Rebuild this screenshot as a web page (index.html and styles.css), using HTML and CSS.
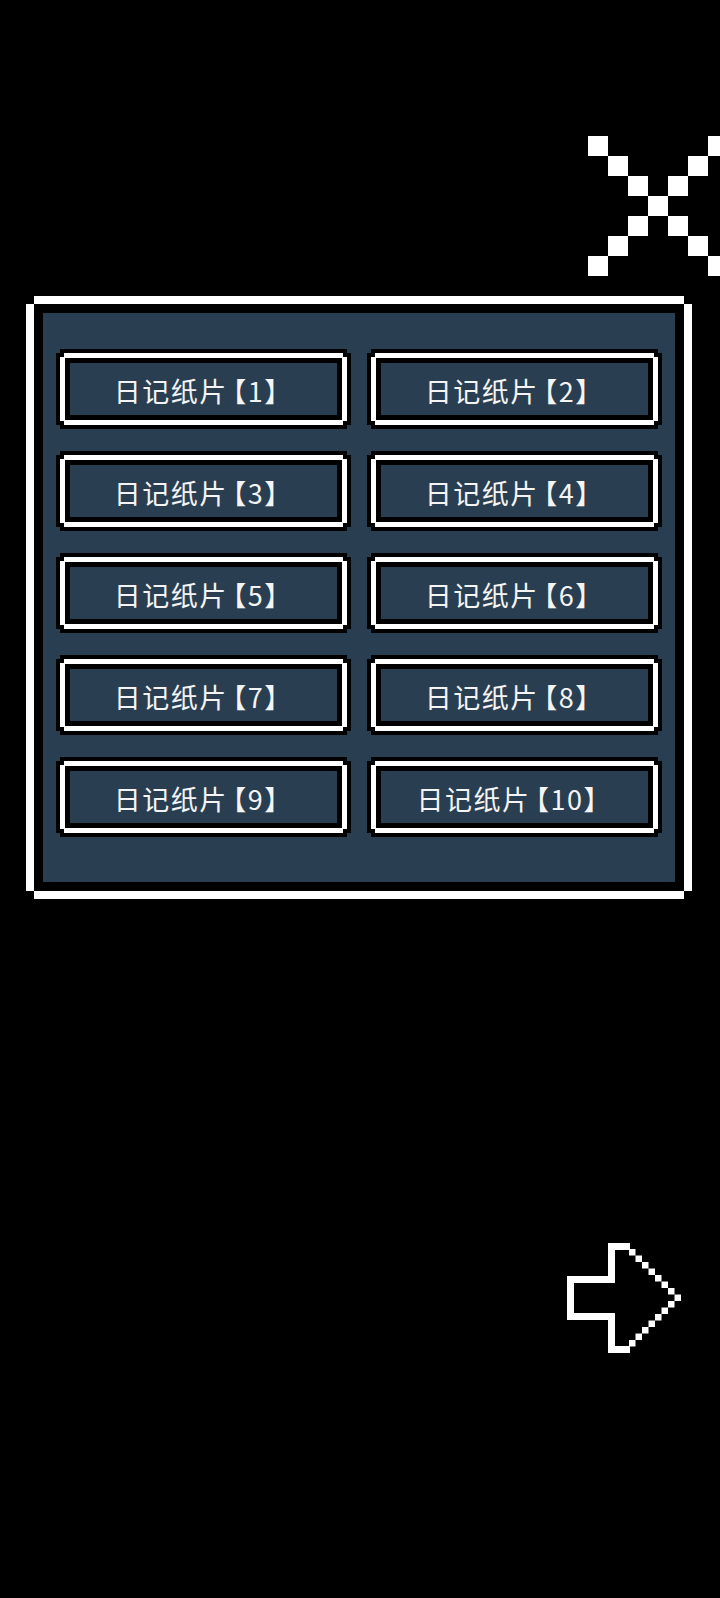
FILE: index.html
```html
<!DOCTYPE html>
<html lang="zh-CN">
<head>
<meta charset="utf-8">
<title>日记纸片</title>
<link rel="stylesheet" href="styles.css">
</head>
<body>
<div class="screen">
  <div class="topbar">
    <svg class="close" width="132" height="140" viewBox="588 136 132 140" aria-label="关闭">
      <g fill="#fff">
        <rect x="588" y="136" width="20" height="20"/><rect x="708" y="136" width="20" height="20"/>
        <rect x="608" y="156" width="20" height="20"/><rect x="688" y="156" width="20" height="20"/>
        <rect x="628" y="176" width="20" height="20"/><rect x="668" y="176" width="20" height="20"/>
        <rect x="648" y="196" width="20" height="20"/>
        <rect x="628" y="216" width="20" height="20"/><rect x="668" y="216" width="20" height="20"/>
        <rect x="608" y="236" width="20" height="20"/><rect x="688" y="236" width="20" height="20"/>
        <rect x="588" y="256" width="20" height="20"/><rect x="708" y="256" width="20" height="20"/>
      </g>
    </svg>
  </div>

  <div class="panel">
    <div class="panel-black">
      <div class="panel-body">
        <div class="btn"><div class="btn-w"><div class="btn-in">日记纸片<span class="bk bk-l">【</span>1<span class="bk">】</span></div></div></div>
        <div class="btn"><div class="btn-w"><div class="btn-in">日记纸片<span class="bk bk-l">【</span>2<span class="bk">】</span></div></div></div>
        <div class="btn"><div class="btn-w"><div class="btn-in">日记纸片<span class="bk bk-l">【</span>3<span class="bk">】</span></div></div></div>
        <div class="btn"><div class="btn-w"><div class="btn-in">日记纸片<span class="bk bk-l">【</span>4<span class="bk">】</span></div></div></div>
        <div class="btn"><div class="btn-w"><div class="btn-in">日记纸片<span class="bk bk-l">【</span>5<span class="bk">】</span></div></div></div>
        <div class="btn"><div class="btn-w"><div class="btn-in">日记纸片<span class="bk bk-l">【</span>6<span class="bk">】</span></div></div></div>
        <div class="btn"><div class="btn-w"><div class="btn-in">日记纸片<span class="bk bk-l">【</span>7<span class="bk">】</span></div></div></div>
        <div class="btn"><div class="btn-w"><div class="btn-in">日记纸片<span class="bk bk-l">【</span>8<span class="bk">】</span></div></div></div>
        <div class="btn"><div class="btn-w"><div class="btn-in">日记纸片<span class="bk bk-l">【</span>9<span class="bk">】</span></div></div></div>
        <div class="btn"><div class="btn-w"><div class="btn-in">日记纸片<span class="bk bk-l">【</span>10<span class="bk">】</span></div></div></div>
      </div>
    </div>
  </div>

  <div class="bottombar">
    <svg class="next" width="130" height="120" viewBox="560 1238 130 120" aria-label="下一页">
      <g fill="#fff">
        <rect x="608" y="1243" width="22" height="7"/>
        <rect x="608" y="1243" width="7" height="40"/>
        <rect x="567" y="1276" width="48" height="7"/>
        <rect x="567" y="1276" width="7" height="44"/>
        <rect x="567" y="1313" width="48" height="7"/>
        <rect x="608" y="1313" width="7" height="40"/>
        <rect x="608" y="1346" width="22" height="7"/>
        <rect x="629" y="1249" width="6.5" height="6.5"/>
        <rect x="635.5" y="1255.5" width="6.5" height="6.5"/>
        <rect x="642" y="1262" width="6.5" height="6.5"/>
        <rect x="648.5" y="1268.5" width="6.5" height="6.5"/>
        <rect x="655" y="1275" width="6.5" height="6.5"/>
        <rect x="661.5" y="1281.5" width="6.5" height="6.5"/>
        <rect x="668" y="1288" width="6.5" height="6.5"/>
        <rect x="674.5" y="1294.5" width="6.5" height="6.5"/>
        <rect x="668" y="1301" width="6.5" height="6.5"/>
        <rect x="661.5" y="1307.5" width="6.5" height="6.5"/>
        <rect x="655" y="1314" width="6.5" height="6.5"/>
        <rect x="648.5" y="1320.5" width="6.5" height="6.5"/>
        <rect x="642" y="1327" width="6.5" height="6.5"/>
        <rect x="635.5" y="1333.5" width="6.5" height="6.5"/>
        <rect x="629" y="1340" width="6.5" height="6.5"/>
      </g>
    </svg>
  </div>
</div>
</body>
</html>
```

FILE: styles.css
```css
html, body {
  margin: 0;
  padding: 0;
  background: #000;
}

body {
  width: 720px;
  height: 1598px;
  overflow: hidden;
  font-family: "Noto Sans CJK SC", "Noto Sans", sans-serif;
}

.screen {
  width: 720px;
  height: 1598px;
  display: flex;
  flex-direction: column;
}

.topbar {
  display: flex;
  justify-content: flex-end;
  padding-top: 136px;
  height: 140px;
}

.close {
  display: block;
}

.panel {
  margin-top: 20px;
  margin-left: 26px;
  width: 666px;
  height: 603px;
  box-sizing: border-box;
  background: #fff;
  padding: 8px;
  clip-path: polygon(8px 0, calc(100% - 8px) 0, calc(100% - 8px) 8px, 100% 8px,
    100% calc(100% - 8px), calc(100% - 8px) calc(100% - 8px), calc(100% - 8px) 100%,
    8px 100%, 8px calc(100% - 8px), 0 calc(100% - 8px), 0 8px, 8px 8px);
}

.panel-black {
  height: 100%;
  box-sizing: border-box;
  background: #000;
  padding: 9px;
}

.panel-body {
  height: 100%;
  box-sizing: border-box;
  background: #293f51;
  padding: 36px 13px 44px 13px;
  display: grid;
  grid-template-columns: 1fr 1fr;
  grid-auto-rows: 80px;
  column-gap: 16px;
  row-gap: 22px;
}

.btn {
  background: #000;
  padding: 4px;
  clip-path: polygon(4px 0, calc(100% - 4px) 0, calc(100% - 4px) 4px, 100% 4px,
    100% calc(100% - 4px), calc(100% - 4px) calc(100% - 4px), calc(100% - 4px) 100%,
    4px 100%, 4px calc(100% - 4px), 0 calc(100% - 4px), 0 4px, 4px 4px);
}

.btn-w {
  height: 100%;
  box-sizing: border-box;
  background: #fff;
  padding: 5px;
  clip-path: polygon(4px 0, calc(100% - 4px) 0, calc(100% - 4px) 4px, 100% 4px,
    100% calc(100% - 4px), calc(100% - 4px) calc(100% - 4px), calc(100% - 4px) 100%,
    4px 100%, 4px calc(100% - 4px), 0 calc(100% - 4px), 0 4px, 4px 4px);
}

.btn-in {
  height: 100%;
  box-sizing: border-box;
  background: #293f51;
  border: 5px solid #000;
  display: flex;
  align-items: center;
  justify-content: center;
  color: #f4f4f4;
  font-size: 27px;
  letter-spacing: 1.5px;
  line-height: 1;
  padding-top: 2px;
  padding-right: 14px;
  white-space: nowrap;
}

.bk {
  font-feature-settings: "halt" 1;
}

.bk-l {
  margin-left: 5px;
}

.bottombar {
  display: flex;
  justify-content: flex-end;
  padding-right: 30px;
  margin-top: 339px;
}

.next {
  display: block;
}
```
